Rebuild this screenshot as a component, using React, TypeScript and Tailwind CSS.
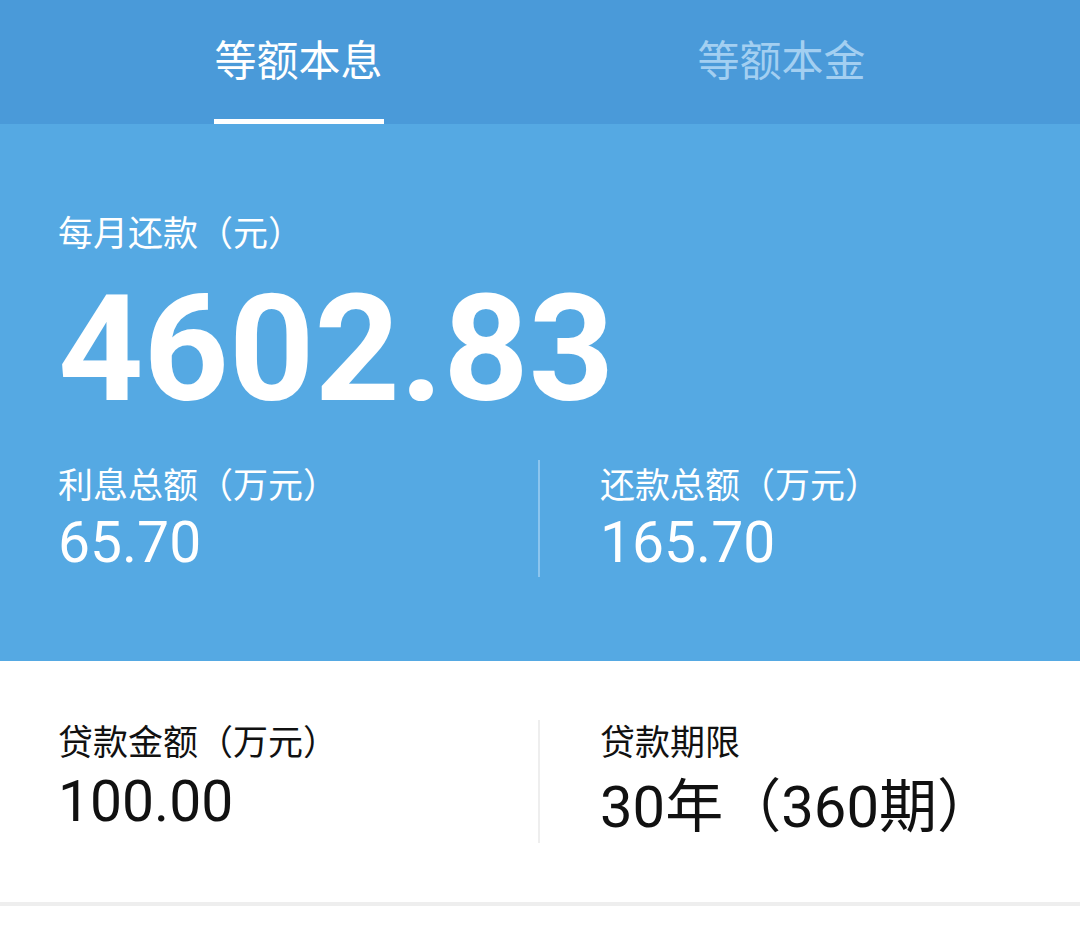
import React from "react";

const cjk = { fontFamily: 'Roboto, "Noto Sans CJK SC", sans-serif' };

export default function App() {
  return (
    <div className="w-[1080px] h-[933px] bg-white" style={cjk}>
      {/* Tabs */}
      <div className="h-[124px] bg-[#4a9ad9] grid grid-cols-2 px-[57px]">
        <div className="flex flex-col items-center justify-end">
          <div className="text-[42px] leading-[50px] text-white mb-[32px]">等额本息</div>
          <div className="w-[170px] h-[5px] bg-white" />
        </div>
        <div className="flex flex-col items-center justify-end">
          <div className="text-[42px] leading-[50px] text-[#a3cff1] mb-[37px]">等额本金</div>
        </div>
      </div>
      {/* Blue summary */}
      <div className="h-[537px] bg-[#55a9e3] text-white pt-[91px] px-[58px]">
        <div className="text-[35px] leading-[40px]">每月还款（元）</div>
        <div className="text-[149px] leading-[150px] font-bold mt-[19px]">4602.83</div>
        <div className="grid grid-cols-[482px_1fr] mt-[36px]">
          <div className="border-r-2 border-[#8cc5ee] h-[117px] pt-[7px]">
            <div className="text-[35px] leading-[40px]">利息总额（万元）</div>
            <div className="text-[57px] leading-[64px] mt-[4px]">65.70</div>
          </div>
          <div className="pl-[60px] pt-[7px]">
            <div className="text-[35px] leading-[40px]">还款总额（万元）</div>
            <div className="text-[57px] leading-[64px] mt-[4px]">165.70</div>
          </div>
        </div>
      </div>
      {/* White details */}
      <div className="h-[241px] px-[58px] pt-[59px] text-[#111]">
        <div className="grid grid-cols-[482px_1fr]">
          <div className="border-r-2 border-[#eeeeee] h-[123px] pt-[4px]">
            <div className="text-[35px] leading-[40px]">贷款金额（万元）</div>
            <div className="text-[57px] leading-[64px] mt-[6px]">100.00</div>
          </div>
          <div className="pl-[60px] pt-[4px]">
            <div className="text-[35px] leading-[40px]">贷款期限</div>
            <div className="text-[58px] leading-[64px] mt-[11px]">30年（360期）</div>
          </div>
        </div>
      </div>
      <div className="h-[4px] bg-[#eeeeee]" />
    </div>
  );
}
